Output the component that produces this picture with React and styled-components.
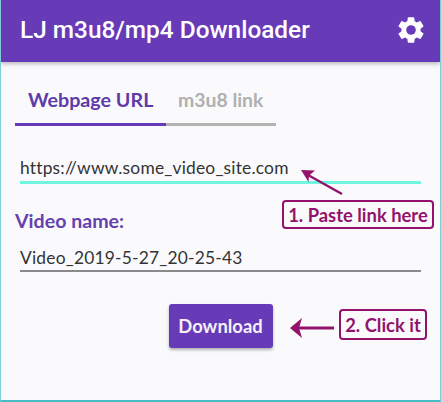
import React from 'react'
import styled, { createGlobalStyle } from 'styled-components'

const GlobalStyle = createGlobalStyle`
  html, body {
    margin: 0;
    padding: 0;
    background: #fafafc;
  }
`

function GearIcon() {
  return (
    <svg width="32" height="32" viewBox="0 0 24 24" fill="#fff">
      <path d="M19.14 12.94c.04-.3.06-.61.06-.94 0-.32-.02-.64-.07-.94l2.03-1.58a.49.49 0 0 0 .12-.61l-1.92-3.32a.49.49 0 0 0-.59-.22l-2.39.96c-.5-.38-1.03-.7-1.62-.94l-.36-2.54a.48.48 0 0 0-.48-.41h-3.84a.48.48 0 0 0-.47.41l-.36 2.54c-.59.24-1.13.57-1.62.94l-2.39-.96a.49.49 0 0 0-.59.22L2.74 8.87a.48.48 0 0 0 .12.61l2.03 1.58c-.05.3-.07.62-.07.94s.02.64.07.94l-2.03 1.58a.49.49 0 0 0-.12.61l1.92 3.32c.12.22.37.29.59.22l2.39-.96c.5.38 1.03.7 1.62.94l.36 2.54c.05.24.24.41.48.41h3.84c.24 0 .44-.17.47-.41l.36-2.54c.59-.24 1.13-.56 1.62-.94l2.39.96c.22.08.47 0 .59-.22l1.92-3.32a.48.48 0 0 0-.12-.61l-2.01-1.58zM12 15.6A3.6 3.6 0 1 1 12 8.4a3.6 3.6 0 0 1 0 7.2z" />
    </svg>
  )
}

export default function App() {
  return (
    <Page>
      <GlobalStyle />
      <AppBar>
        <Title>LJ m3u8/mp4 Downloader</Title>
        <GearIcon />
      </AppBar>
      <Content>
        <Tabs>
          <Tab $active>Webpage URL</Tab>
          <Tab>m3u8 link</Tab>
        </Tabs>
        <UrlField $focused>https://www.some_video_site.com</UrlField>
        <FieldLabel>Video name:</FieldLabel>
        <UrlField>Video_2019-5-27_20-25-43</UrlField>
        <ButtonRow>
          <DownloadButton>Download</DownloadButton>
        </ButtonRow>
      </Content>

      <PasteArrow width="44" height="28" viewBox="0 0 44 28">
        <path d="M42 26 L8 7" stroke="#93126b" strokeWidth="2.4" fill="none" />
        <path d="M1 2 L15 2.5 L9 7.5 L8.5 14 Z" fill="#93126b" />
      </PasteArrow>
      <PasteNote>1. Paste link here</PasteNote>

      <ClickArrow width="46" height="22" viewBox="0 0 46 22">
        <path d="M8 11 H45" stroke="#93126b" strokeWidth="3" fill="none" />
        <path d="M1 11 L13 1 L10 11 L13 21 Z" fill="#93126b" />
      </ClickArrow>
      <ClickNote>2. Click it</ClickNote>
    </Page>
  )
}

const Page = styled.div`
  position: relative;
  width: 441px;
  height: 402px;
  box-sizing: border-box;
  border-left: 1px solid #7fcfd6;
  border-right: 1px solid #7fcfd6;
  border-bottom: 2px solid #45bcc6;
  background: #fafafc;
  font-family: Lato, "Noto Sans", sans-serif;
  overflow: hidden;
`

const AppBar = styled.header`
  display: flex;
  align-items: center;
  justify-content: space-between;
  height: 62px;
  padding: 0 13px 3px 19px;
  box-sizing: border-box;
  background: #673ab7;
  box-shadow: 0 2px 4px rgba(0, 0, 0, 0.25);
`

const Title = styled.h1`
  margin: 0;
  font-family: Roboto, sans-serif;
  font-size: 24.4px;
  font-weight: 500;
  color: #fff;
`

const Content = styled.main`
  padding: 17px 19px 0 14px;
`

const Tabs = styled.div`
  display: flex;
  width: 261px;
`

const Tab = styled.div`
  box-sizing: border-box;
  height: 47px;
  padding: 9px 0 0 ${(p) => (p.$active ? '13px' : '12px')};
  flex: ${(p) => (p.$active ? '0 0 151px' : '1')};
  font-size: ${(p) => (p.$active ? '19.7px' : '19.4px')};
  font-weight: 700;
  color: ${(p) => (p.$active ? '#5e3ba8' : '#b0b0b0')};
  border-bottom: 3px solid ${(p) => (p.$active ? '#673ab7' : '#b3b3b3')};
`

const UrlField = styled.div`
  box-sizing: border-box;
  margin: ${(p) => (p.$focused ? '29px' : '13px')} 0 0 5px;
  height: ${(p) => (p.$focused ? '29px' : '27px')};
  padding-top: 2px;
  font-size: 17.4px;
  line-height: 22px;
  letter-spacing: 0.2px;
  color: #333;
  border-bottom: ${(p) => (p.$focused ? '3px solid #6ff5e0' : '2px solid #8a8a8a')};
`

const FieldLabel = styled.label`
  display: block;
  margin-top: 26px;
  font-size: 19.6px;
  font-weight: 700;
  line-height: 22px;
  color: #6441ad;
`

const ButtonRow = styled.div`
  display: flex;
  justify-content: center;
  margin-top: 32px;
  padding-left: 5px;
`

const DownloadButton = styled.button`
  width: 104px;
  height: 44px;
  border: none;
  border-radius: 3px;
  background: #673ab7;
  color: #f4f0fa;
  font-family: Lato, sans-serif;
  font-size: 18.4px;
  font-weight: 700;
  box-shadow: 0 2px 3px rgba(0, 0, 0, 0.3);
`

const Note = styled.div`
  position: absolute;
  box-sizing: border-box;
  display: flex;
  align-items: center;
  justify-content: center;
  border: 2px solid #93126b;
  border-radius: 4px;
  background: #fafafc;
  color: #93126b;
  font-size: 18.4px;
  font-weight: 700;
  white-space: nowrap;
`

const PasteNote = styled(Note)`
  left: 281px;
  top: 200px;
  width: 152px;
  height: 29px;
`

const ClickNote = styled(Note)`
  left: 338px;
  top: 309px;
  width: 88px;
  height: 31px;
`

const PasteArrow = styled.svg`
  position: absolute;
  left: 299px;
  top: 168px;
`

const ClickArrow = styled.svg`
  position: absolute;
  left: 288px;
  top: 317px;
`
